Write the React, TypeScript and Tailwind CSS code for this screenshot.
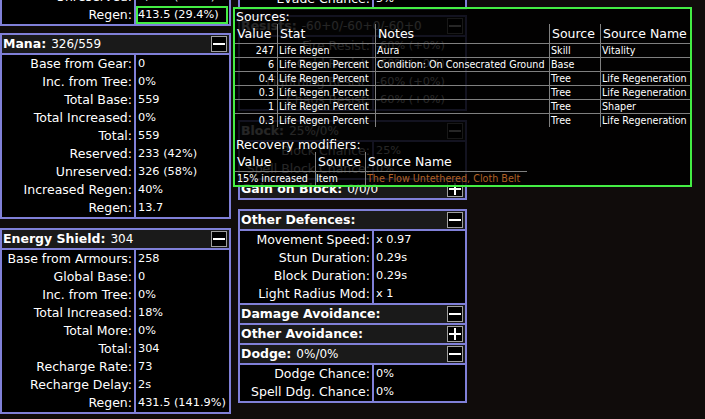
import React from "react";

type Row = { label: string; value: string; hot?: boolean };

const Toggle = ({ open = true }: { open?: boolean }) => (
  <svg width="16" height="16" viewBox="0 0 16 16" className="block shrink-0">
    <rect x="0.5" y="0.5" width="15" height="15" fill="#000" stroke="#a0a0a0" />
    <rect x="2" y="7" width="12" height="2" fill="#fff" />
    {!open && <rect x="7" y="2" width="2" height="12" fill="#fff" />}
  </svg>
);

const Header = ({ title, value, open = true }: { title: string; value?: string; open?: boolean }) => (
  <div className="flex items-center bg-[#1a1a1a] pl-[1px] pr-[2px]">
    <span className="font-bold text-[12.5px] leading-[18px] whitespace-nowrap">{title}</span>
    {value && <span className="ml-[5px] text-[12px] leading-[18px] whitespace-nowrap">{value}</span>}
    <span className="ml-auto">
      <Toggle open={open} />
    </span>
  </div>
);

const Rows = ({ rows }: { rows: Row[] }) => (
  <div className="flex flex-col bg-black">
    {rows.map((r) => (
      <div key={r.label} className="flex h-[18px]">
        <div className="w-[132px] shrink-0 pr-[2px] text-right text-[12.5px] leading-[18px] whitespace-nowrap">
          {r.label}
        </div>
        <div className="flex-1 border-l-2 border-[#8080d8]">
          {r.hot ? (
            <div className="h-full mr-[1px] border-2 border-[#44ee44] text-[11.3px] leading-[14px] whitespace-nowrap">
              {r.value}
            </div>
          ) : (
            <div className="pl-[2px] text-[11.3px] leading-[18px] whitespace-nowrap">{r.value}</div>
          )}
        </div>
      </div>
    ))}
  </div>
);

const Group = ({ children, className = "" }: { children: React.ReactNode; className?: string }) => (
  <div className={`flex flex-col border-2 border-[#8080d8] divide-y-2 divide-[#8080d8] ${className}`}>
    {children}
  </div>
);

const SOURCES = [
  ["247", "Life Regen", "Aura", "Skill", "Vitality"],
  ["6", "Life Regen Percent", "Condition: On Consecrated Ground", "Base", ""],
  ["0.4", "Life Regen Percent", "", "Tree", "Life Regeneration"],
  ["0.3", "Life Regen Percent", "", "Tree", "Life Regeneration"],
  ["1", "Life Regen Percent", "", "Tree", "Shaper"],
  ["0.3", "Life Regen Percent", "", "Tree", "Life Regeneration"],
];

const COLS = ["w-[98px]", "w-[174px]", "w-[51px]", "w-[90px]"];

const Tooltip = () => (
  <div className="absolute left-[233px] top-[7px] w-[459px] h-[180px] border-2 border-[#44ee44] bg-black/85">
    <div className="pl-[1px] text-[12.5px] leading-[15px]">Sources:</div>
    <div className="flex flex-col">
      <div className="flex h-[19px] text-[12.5px] leading-[19px] whitespace-nowrap">
        <div className="w-[42px] pl-[2px]">Value</div>
        {["Stat", "Notes", "Source", "Source Name"].map((h, i) => (
          <div key={h} className={`${COLS[i]} border-l border-[#808080] pl-[2px]`}>
            {h}
          </div>
        ))}
      </div>
      {SOURCES.map((r, k) => (
        <div key={k} className="flex h-[14px] border-t border-[#808080] text-[9.6px] leading-[13px] whitespace-nowrap">
          <div className="w-[42px] pr-[3px] text-right">{r[0]}</div>
          {r.slice(1).map((c, i) => (
            <div key={i} className={`${COLS[i]} border-l border-[#808080] pl-[1px]`}>
              {c}
            </div>
          ))}
        </div>
      ))}
    </div>
    <div className="mt-[10px] pl-[1px] text-[12.5px] leading-[15px]">Recovery modifiers:</div>
    <div className="flex flex-col w-[292px]">
      <div className="flex h-[19px] text-[12.5px] leading-[19px] whitespace-nowrap">
        <div className="w-[80px] pl-[2px]">Value</div>
        <div className="w-[50px] border-l border-[#808080] pl-[2px]">Source</div>
        <div className="w-[162px] border-l border-[#808080] pl-[2px]">Source Name</div>
      </div>
      <div className="flex h-[14px] border-t border-[#808080] text-[9.6px] leading-[13px] whitespace-nowrap">
        <div className="w-[80px] pl-[2px]">15% increased</div>
        <div className="w-[50px] border-l border-[#808080]">Item</div>
        <div className="w-[162px] border-l border-[#808080] pl-[1px] text-[#af6025]">
          The Flow Untethered, Cloth Belt
        </div>
      </div>
    </div>
  </div>
);

export default function App() {
  return (
    <div className="relative w-[705px] h-[419px] overflow-hidden bg-[#100c0b] text-white font-['DejaVu_Sans',sans-serif]">
      <div className="flex items-start">
        <div className="w-[231px] flex flex-col -mt-[12px]">
          <div className="border-x-2 border-b-2 border-[#8080d8]">
            <Rows
              rows={[
                { label: "Unreserved:", value: "1,407 (100%)" },
                { label: "Regen:", value: "413.5 (29.4%)", hot: true },
              ]}
            />
          </div>
          <Group className="mt-[7px]">
            <Header title="Mana:" value="326/559" />
            <Rows
              rows={[
                { label: "Base from Gear:", value: "0" },
                { label: "Inc. from Tree:", value: "0%" },
                { label: "Total Base:", value: "559" },
                { label: "Total Increased:", value: "0%" },
                { label: "Total:", value: "559" },
                { label: "Reserved:", value: "233 (42%)" },
                { label: "Unreserved:", value: "326 (58%)" },
                { label: "Increased Regen:", value: "40%" },
                { label: "Regen:", value: "13.7" },
              ]}
            />
          </Group>
          <Group className="mt-[9px]">
            <Header title="Energy Shield:" value="304" />
            <Rows
              rows={[
                { label: "Base from Armours:", value: "258" },
                { label: "Global Base:", value: "0" },
                { label: "Inc. from Tree:", value: "0%" },
                { label: "Total Increased:", value: "18%" },
                { label: "Total More:", value: "0%" },
                { label: "Total:", value: "304" },
                { label: "Recharge Rate:", value: "73" },
                { label: "Recharge Delay:", value: "2s" },
                { label: "Regen:", value: "431.5 (141.9%)" },
              ]}
            />
          </Group>
        </div>

        <div className="w-[229px] ml-[7px] flex flex-col -mt-[10px]">
          <div className="border-x-2 border-b-2 border-[#8080d8]">
            <Rows rows={[{ label: "Evade Chance:", value: "5%" }]} />
          </div>
          <Group className="mt-[5px]">
            <Header title="Resists:" value="-60+0/-60+0/-60+0" />
            <Rows
              rows={[
                { label: "Fire Resist:", value: "-60% (+0%)" },
                { label: "Cold Resist:", value: "-60% (+0%)" },
                { label: "Lightning Resist:", value: "-60% (+0%)" },
                { label: "Chaos Resist:", value: "-60% (+0%)" },
              ]}
            />
          </Group>
          <Group className="mt-[9px]">
            <Header title="Block:" value="25%/0%" />
            <Rows
              rows={[
                { label: "Block Chance:", value: "25%" },
                { label: "Spell Block Chance:", value: "0%" },
              ]}
            />
            <Header title="Gain on Block:" value="0/0/0" open={false} />
          </Group>
          <Group className="mt-[9px]">
            <Header title="Other Defences:" />
            <Rows
              rows={[
                { label: "Movement Speed:", value: "x 0.97" },
                { label: "Stun Duration:", value: "0.29s" },
                { label: "Block Duration:", value: "0.29s" },
                { label: "Light Radius Mod:", value: "x 1" },
              ]}
            />
            <Header title="Damage Avoidance:" />
            <Header title="Other Avoidance:" open={false} />
            <Header title="Dodge:" value="0%/0%" />
            <Rows
              rows={[
                { label: "Dodge Chance:", value: "0%" },
                { label: "Spell Ddg. Chance:", value: "0%" },
              ]}
            />
          </Group>
        </div>
      </div>
      <Tooltip />
    </div>
  );
}
